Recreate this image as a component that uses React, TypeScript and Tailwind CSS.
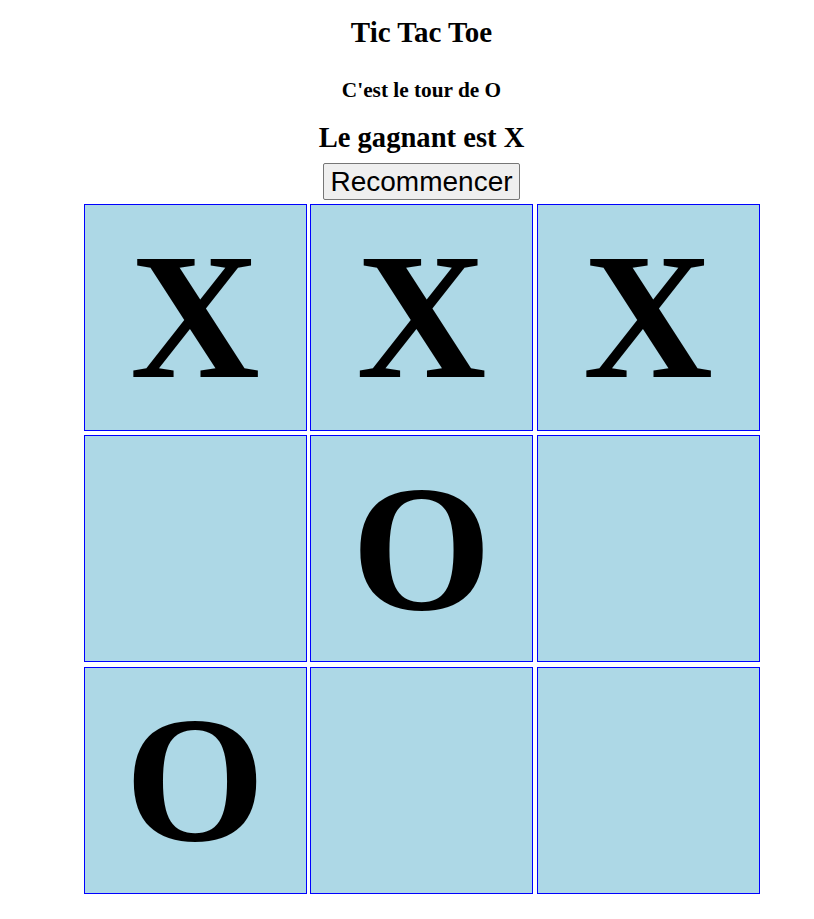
import React, { useState } from 'react';

type Cell = 'X' | 'O' | null;

const initialBoard: Cell[] = ['X', 'X', 'X', null, 'O', null, 'O', null, null];

const App: React.FC = () => {
  const [board, setBoard] = useState<Cell[]>(initialBoard);

  const handleReset = () => {
    setBoard(Array(9).fill(null));
  };

  return (
    <div
      className="min-h-screen bg-white text-black pl-[29px] text-center"
      style={{ fontFamily: '"Liberation Serif", "Times New Roman", serif' }}
    >
      <h1 className="pt-[16px] text-[29px] leading-[33px] font-bold">Tic Tac Toe</h1>
      <h3 className="mt-[28.5px] text-[21.3px] leading-[24px] font-bold">C'est le tour de O</h3>
      <h2 className="mt-[20px] text-[28.6px] leading-[32px] font-bold">Le gagnant est X</h2>
      <button
        onClick={handleReset}
        className="mt-[9px] px-[6px] py-px text-[28px] leading-[33px] bg-[#efefef] border border-[#767676] rounded-[2px] text-black"
        style={{ fontFamily: '"Liberation Sans", Arial, sans-serif' }}
      >
        Recommencer
      </button>
      <div className="mt-[4px] mx-auto w-fit grid grid-cols-[223px_223px_223px] grid-rows-[227px_227px_227px] gap-x-[3.5px] gap-y-[4.5px]">
        {board.map((cell, i) => (
          <div
            key={i}
            className="flex items-center justify-center bg-[#add8e6] border border-[#0000ff] text-[180px] leading-none font-bold"
          >
            {cell}
          </div>
        ))}
      </div>
    </div>
  );
};

export default App;
